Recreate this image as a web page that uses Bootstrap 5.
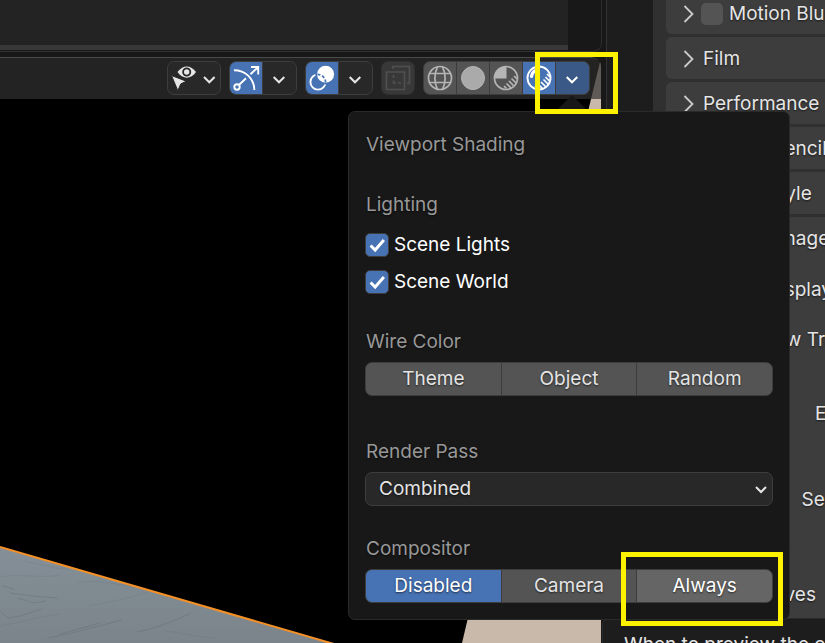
<!DOCTYPE html>
<html lang="en" data-bs-theme="dark">
<head>
<meta charset="utf-8">
<meta name="viewport" content="width=device-width, initial-scale=1">
<title>Viewport Shading</title>
<link href="https://cdn.jsdelivr.net/npm/bootstrap@5.3.0/dist/css/bootstrap.min.css" rel="stylesheet">
<style>
  :root { --accent: #4772b3; --line: #3d3d3d; --ink: #e5e5e5; --dark: #181818; }
  body { font-family: Inter, sans-serif; font-size: 19px; line-height: 34px; color: var(--ink); background: var(--dark); }
  svg { display: block; fill: none; }
  .app { min-height: 100vh; }
  .shade { text-shadow: 0 1px 2px #0009; }

  /* upper editor */
  .upper { height: 52px; border-right: 1px solid #2c2c2c; border-bottom: 1px solid #333; border-bottom-right-radius: 9px; margin-right: 4px; }
  .upper-body { background: #232323; border-bottom: 5px solid #383838; margin-bottom: 1px; }
  .upper-side { width: 33px; }

  /* 3D viewport */
  .view { background: #000; margin: 5px 5px 0 0; border-top-right-radius: 9px; }
  .view-head { background: #232323; border-top: 1px solid #4a4a4a; height: 42px; padding: 3px 11px 0 0; gap: 8px; border-top-right-radius: 9px; }
  .scene { left: 0; right: 0; bottom: 0; top: 0; }
  .tool-set { height: 34px; border: 1px solid var(--line); border-radius: 7px; background: #282828; overflow: hidden; }
  .tool { border: 0; padding: 0; border-radius: 0; width: 33px; height: 32px; color: var(--ink); background: none; display: block; }
  .tool:first-child { width: 32px; }
  .tool:last-child:not(:first-child) { width: 34px; }
  .tool + .tool { border-left: 1px solid var(--line); }
  .tool.tool-wide { width: 52px; }
  .tool.on { background: var(--accent); color: #fff; }
  .tool.open { background: #3b5986; color: #fff; }
  .tool svg { margin-top: -1px; margin-left: -1px; }
  .tool-set.solid { background: #545454; }
  .tool-set.solid .tool { color: #b5b5b5; }
  .tool-set.solid .on, .tool-set.solid .open { color: #fff; }
  .tool-set.off { background: #383838; border-color: #303030; }
  .tool-set.off .tool { color: #505050; opacity: 1; }

  /* properties editor */
  .props { width: 219px; border-left: 1px solid #333; background: #1d1d1d; }
  .props-list { width: 260px; margin-left: 46px; padding: 0 0 0 13px; background: #303030; min-height: 100vh; gap: 3px; }
  .prop-panel { background: var(--line); border-radius: 6px; min-height: 42px; padding: 5px 8px 3px 17px; white-space: nowrap; }
  .prop-first { min-height: 34px; padding-top: 0; padding-bottom: 6px; border-radius: 0 0 6px 6px; line-height: 28px; }
  .prop-head { gap: 8px; }
  .prop-panel .form-check-input { margin: 0 6px 0 -2px; width: 22px; height: 22px; background: #545454; border: 0; }
  .prop-fields { width: 216px; padding-top: 17px; }
  .field-near { padding-top: 3px; }
  .field-far { padding-top: 9px; }
  .field-group { padding-top: 18px; }
  .prop-sub { padding-left: 41px; }
  .prop-curves { padding-left: 69px; }

  /* popover */
  .pop { top: 111px; right: 35px; width: 442px; background: var(--dark); border: 1px solid #2a2a2a; border-radius: 7px; padding: 16px; z-index: 3; }
  .pop-tip { top: -17px; right: 200px; }
  .pop-group { padding-top: 26px; }
  .pop-group-far { padding-top: 39px; }
  .dim { color: #989898; margin-bottom: 3px; padding-left: 1px; }
  .check-list { padding-top: 3px; }
  .check-row { gap: 5px; height: 34px; margin-top: 3px; color: #fff; }
  .dim + .check-list .check-row:first-child { margin-top: 0; }
  .check-row .form-check-input { width: 24px; height: 24px; margin: 0; border: 1px solid var(--line); border-radius: 5px; }
  .check-row .form-check-input:checked { background-color: var(--accent);
    background-image: url("data:image/svg+xml,%3csvg xmlns='http://www.w3.org/2000/svg' viewBox='0 0 24 24'%3e%3cpath fill='none' stroke='%23fff' stroke-width='3.2' d='M5 12.500l5 5L19.500 6.500'/%3e%3c/svg%3e"); }
  .seg .btn { flex: 1 1 0; padding: 0; font-size: 19px; line-height: 32px; color: var(--ink); background: #545454; border: 1px solid var(--line); border-radius: 7px; }
  .seg .btn.chosen { background: var(--accent); color: #fff; }
  .seg .btn.hovered { background: #656565; color: #fff; }
  .pick { height: 34px; padding: 0 40px 0 13px; font-size: 19px; line-height: 32px; color: var(--ink); background-color: #282828; border: 1px solid var(--line); border-radius: 7px;
    background-image: url("data:image/svg+xml,%3csvg xmlns='http://www.w3.org/2000/svg' viewBox='0 0 16 16'%3e%3cpath fill='none' stroke='%23e5e5e5' stroke-width='2' d='M3 6l5 5 5-5'/%3e%3c/svg%3e"); background-size: 16px 16px; background-position: right 3px center; }

  /* hint and highlight frames */
  .hint { top: 618px; left: calc(100% - 223px); width: 640px; height: 90px; background: #1d1d1d; border: 1px solid #2a2a2a; border-radius: 7px; padding: 9px 21px; z-index: 2; white-space: nowrap; }
  .frame { border: 5px solid #fff200; z-index: 4; pointer-events: none; }
  .frame-top { top: 52px; right: 207px; width: 83px; height: 62px; }
  .frame-low { top: 552px; right: 42px; width: 162px; height: 74px; }
</style>
</head>
<body>
<div class="app d-flex position-relative overflow-hidden">

  <main class="d-flex flex-column flex-grow-1">
    <section class="upper d-flex overflow-hidden" aria-label="Upper editor">
      <div class="upper-body flex-grow-1"></div>
      <div class="upper-side"></div>
    </section>

    <section class="view flex-grow-1 position-relative d-flex flex-column overflow-hidden" aria-label="3D viewport">
      <header class="view-head d-flex justify-content-end">
        <div class="tool-set d-flex">
          <button class="tool tool-wide" type="button" aria-label="Object visibility">
            <svg width="54" height="34" viewBox="0 0 54 34">
              <path fill="currentColor" d="M10.500 11c5-7.500 13.500-7.500 18.500 0c-5 7.500-13.500 7.500-18.500 0z"/>
              <circle cx="19.700" cy="11" r="3.600" fill="currentColor" stroke="#282828" stroke-width="1.800"/>
              <path fill="currentColor" stroke="#282828" stroke-width="1" d="M4.500 14.500l14.800 5.700-5.500 2.700-3 6.800z"/>
              <path stroke="currentColor" stroke-width="2" d="M37 16l5.300 5.300L47.600 16"/>
            </svg>
          </button>
        </div>
        <div class="tool-set d-flex">
          <button class="tool on" type="button" aria-label="Show gizmos">
            <svg width="34" height="34" viewBox="0 0 34 34" stroke="currentColor" stroke-width="1.900">
              <path d="M5 9.300C16 9.300 25 17 25.400 29M22 6h7.200v7.500M29 6.200l-7.500 7M10.200 23.800l6.800-6.500"/><circle cx="8" cy="26" r="2.700"/>
            </svg>
          </button>
          <button class="tool" type="button" aria-label="Gizmo options">
            <svg width="34" height="34" viewBox="0 0 34 34" stroke="currentColor" stroke-width="2"><path d="M11.700 16l5.300 5.300 5.300-5.300"/></svg>
          </button>
        </div>
        <div class="tool-set d-flex">
          <button class="tool on" type="button" aria-label="Show overlays">
            <svg width="34" height="34" viewBox="0 0 34 34">
              <circle cx="13" cy="21" r="7.600" stroke="currentColor" stroke-width="1.900"/>
              <circle cx="20.600" cy="13.300" r="9.400" fill="currentColor" stroke="#4772b3" stroke-width="1.800"/>
              <path stroke="#4772b3" stroke-width="1.700" stroke-dasharray="3 1.800" d="M12.500 13.400c4.500 0 8.100 3.600 8.100 8.100"/>
            </svg>
          </button>
          <button class="tool" type="button" aria-label="Overlay options">
            <svg width="34" height="34" viewBox="0 0 34 34" stroke="currentColor" stroke-width="2"><path d="M11.700 16l5.300 5.300 5.300-5.300"/></svg>
          </button>
        </div>
        <div class="tool-set off d-flex">
          <button class="tool" type="button" disabled aria-label="Toggle X-ray">
            <svg width="34" height="34" viewBox="0 0 34 34" stroke="currentColor" stroke-width="1.700">
              <path d="M5.500 11h18v17.500h-18zM12 8V5.500h16.500v17H26M12.500 14v3M12.500 19.500V22h2.500M17 22h3"/>
            </svg>
          </button>
        </div>
        <div class="tool-set solid d-flex">
          <button class="tool" type="button" aria-label="Wireframe shading">
            <svg width="34" height="34" viewBox="0 0 34 34" stroke="currentColor" stroke-width="1.700">
              <circle cx="17" cy="17" r="11.500"/><path d="M14.500 5.800c-3.300 7-3.300 15.500 0 22.500M19.500 5.800c3.300 7 3.300 15.500 0 22.500M6.500 12.500h21M6.500 21.500h21"/>
            </svg>
          </button>
          <button class="tool" type="button" aria-label="Solid shading">
            <svg width="34" height="34" viewBox="0 0 34 34"><circle cx="17" cy="17" r="11.500" fill="#aaaaaa" stroke="currentColor"/></svg>
          </button>
          <button class="tool" type="button" aria-label="Material preview shading">
            <svg width="34" height="34" viewBox="0 0 34 34" stroke="currentColor" stroke-width="1.700">
              <circle cx="17" cy="17" r="11.500"/><path fill="currentColor" stroke="none" d="M17.500 17.500H5.500a11.700 11.700 0 0 1 12-12z"/>
              <path d="M25 15l3 3M22.500 17.500l4.500 4.500M20 20l4.500 4.500M17.500 22.500l4.500 4.500M15 25l2.500 2.500"/>
            </svg>
          </button>
          <button class="tool on" type="button" aria-label="Rendered shading">
            <svg width="34" height="34" viewBox="0 0 34 34" stroke="currentColor" stroke-width="1.900">
              <circle cx="17" cy="17" r="11.500"/><path stroke-width="3.200" stroke-linecap="round" d="M9.500 15.500c.5-3.300 3-5.800 6-6.300"/>
              <path stroke-width="1.700" d="M25 13l3 3M23.500 16l4 4M21.500 18.500l4.500 4.500M19 21l4.500 4.500M16 23l4.500 4.500M13 25l3 3"/>
            </svg>
          </button>
          <button class="tool open" type="button" aria-label="Shading options" aria-expanded="true">
            <svg width="34" height="34" viewBox="0 0 34 34" stroke="currentColor" stroke-width="2"><path d="M11.700 16l5.300 5.300 5.300-5.300"/></svg>
          </button>
        </div>
      </header>

      <!-- rendered scene behind the header -->
      <svg class="scene position-absolute w-100 h-100 pe-none" viewBox="0 0 601 586" preserveAspectRatio="xMaxYMin slice" aria-hidden="true">
        <defs>
          <linearGradient id="slab" x1="0" y1="0" x2="0" y2="1"><stop offset="0" stop-color="#848f97"/><stop offset="1" stop-color="#7b848b"/></linearGradient>
        </defs>
        <path fill="#c8b9aa" d="M591 42L462 586h140V42z"/>
        <path fill="#5f5a55" d="M600 5l-9 37h11V5z"/>
        <path fill="url(#slab)" d="M0 490L332 586H0z"/>
        <g stroke="#55606a" stroke-linecap="round" opacity=".28">
          <path d="M10 536l22 3 25 2M18 541l16 5 12-2M0 554l8 7 12-2 22-7M2 529l12 3M48 581c22-4 42-10 74-18M137 575c16-3 35-10 54-19M60 577l40-11"/>
          <path opacity=".5" d="M0 520c20-4 40 2 60-2M78 525c20-2 35 2 52 4M90 549c20-4 40-8 58-14M0 569c24-4 42-10 60-12M165 574c18 2 32 6 50 7M25 504c18 4 30 8 42 8"/>
        </g>
        <path stroke="#f49026" stroke-width="2" d="M0 490L334 587"/>
      </svg>
    </section>
  </main>

  <aside class="props flex-shrink-0 overflow-hidden shade" aria-label="Properties">
    <div class="props-list d-flex flex-column">
      <div class="prop-panel prop-first">
        <div class="prop-head d-flex align-items-center">
          <svg width="12" height="18" viewBox="0 0 12 18" stroke="#ccc" stroke-width="1.800"><path d="M1.500 1l8 8-8 8"/></svg>
          <div class="d-flex align-items-center"><input class="form-check-input" type="checkbox" id="blur"><label for="blur">Motion Blur</label></div>
        </div>
      </div>
      <div class="prop-panel"><div class="prop-head d-flex align-items-center">
        <svg width="12" height="18" viewBox="0 0 12 18" stroke="#ccc" stroke-width="1.800"><path d="M1.500 1l8 8-8 8"/></svg>Film</div></div>
      <div class="prop-panel"><div class="prop-head d-flex align-items-center">
        <svg width="12" height="18" viewBox="0 0 12 18" stroke="#ccc" stroke-width="1.800"><path d="M1.500 1l8 8-8 8"/></svg>Performance</div></div>
      <div class="prop-panel"><div class="prop-head d-flex align-items-center">
        <svg width="12" height="18" viewBox="0 0 12 18" stroke="#ccc" stroke-width="1.800"><path d="M1.500 1l8 8-8 8"/></svg>Grease Pencil</div></div>
      <div class="prop-panel"><div class="prop-head d-flex align-items-center">
        <svg width="12" height="18" viewBox="0 0 12 18" stroke="#ccc" stroke-width="1.800"><path d="M1.500 1l8 8-8 8"/></svg>
        <div class="d-flex align-items-center"><input class="form-check-input" type="checkbox" id="free"><label for="free">Freestyle</label></div></div></div>
      <div class="prop-panel flex-grow-1">
        <div class="prop-head d-flex align-items-center">
          <svg width="12" height="12" viewBox="0 0 18 12" stroke="#ccc" stroke-width="1.800"><path d="M1 1.500l8 8 8-8"/></svg>Color Management</div>
        <div class="prop-fields text-end">
          <div>Display Device</div>
          <div class="pt-3">View Transform</div>
          <div class="field-near">Look</div>
          <div class="field-near">Exposure</div>
          <div class="field-far">Gamma</div>
          <div class="field-far">Sequencer</div>
        </div>
        <div class="prop-sub field-group">Display</div>
        <div class="prop-curves field-far">Curves</div>
      </div>
    </div>
  </aside>

  <section class="pop position-absolute" aria-label="Viewport Shading">
    <svg class="pop-tip position-absolute" width="34" height="17" viewBox="0 0 34 17"><path fill="#181818" d="M17 0l17 17H0z"/></svg>
    <div class="dim shade mb-0">Viewport Shading</div>

    <div class="pop-group">
      <div class="dim shade">Lighting</div>
      <div class="check-list">
        <div class="check-row d-flex align-items-center"><input class="form-check-input" type="checkbox" id="lights" checked><label for="lights">Scene Lights</label></div>
        <div class="check-row d-flex align-items-center"><input class="form-check-input" type="checkbox" id="world" checked><label for="world">Scene World</label></div>
      </div>
    </div>

    <div class="pop-group">
      <div class="dim shade" id="wire">Wire Color</div>
      <div class="seg btn-group d-flex" role="group" aria-labelledby="wire">
        <button class="btn shade" type="button">Theme</button>
        <button class="btn shade" type="button">Object</button>
        <button class="btn shade" type="button">Random</button>
      </div>
    </div>

    <div class="pop-group-far">
      <label class="dim shade d-block" for="pass">Render Pass</label>
      <select class="form-select pick shade" id="pass"><option>Combined</option></select>
    </div>

    <div class="pop-group">
      <div class="dim shade" id="comp">Compositor</div>
      <div class="seg btn-group d-flex" role="group" aria-labelledby="comp">
        <button class="btn chosen shade" type="button">Disabled</button>
        <button class="btn shade" type="button">Camera</button>
        <button class="btn hovered shade" type="button">Always</button>
      </div>
    </div>
  </section>

  <div class="hint position-absolute" role="tooltip">When to preview the compositor output inside the viewport</div>
  <div class="frame frame-top position-absolute"></div>
  <div class="frame frame-low position-absolute"></div>
</div>
<script src="https://cdn.jsdelivr.net/npm/bootstrap@5.3.0/dist/js/bootstrap.bundle.min.js"></script>
</body>
</html>
